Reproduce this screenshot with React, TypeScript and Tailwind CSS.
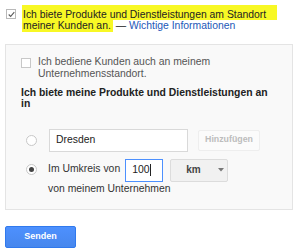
import React from "react";

export default function App() {
  return (
    <div className="relative w-[293px] h-[250px] bg-white overflow-hidden font-['Liberation_Sans',Arial,sans-serif] text-[#222] text-[10.4px] leading-[11.5px]">
      {/* Top checkbox row */}
      <div className="flex items-start pl-[6px] pt-[9px]">
        <div className="w-[10px] h-[10px] border border-[#b9b9b9] bg-white flex items-center justify-center shrink-0">
          <svg width="10" height="9" viewBox="0 0 10 9" className="ml-[1px]">
            <path d="M1 4.5 L3.8 7.2 L9 1.2" fill="none" stroke="#5a5a5a" strokeWidth="1.5" />
          </svg>
        </div>
        <div className="ml-[6px] -mt-[0.5px]">
          <div>
            <span className="bg-[#f8f825] pl-[1px] pr-[11px] pt-[4px]">
              Ich biete Produkte und Dienstleistungen am Standort
            </span>
          </div>
          <div>
            <span className="bg-[#f8f825] pl-[1px] pr-[2px] pb-[1px]">meiner Kunden an.</span>
            <span> — </span>
            <span className="text-[#2358b8]">Wichtige Informationen</span>
          </div>
        </div>
      </div>

      {/* Panel */}
      <div className="ml-[5px] mt-[12px] w-[288px] h-[166px] border border-[#e4e4e4] bg-[#f9f9f9] pl-[15px] pt-[11.5px]">
        <div className="flex items-start">
          <div className="w-[10px] h-[10px] border border-[#c8c8c8] bg-white shrink-0 mt-[1.5px]" />
          <div className="ml-[7px] text-[#555] w-[200px]">
            Ich bediene Kunden auch an meinem Unternehmensstandort.
          </div>
        </div>
        <div className="mt-[7.5px] font-bold text-[#222] w-[255px]">
          Ich biete meine Produkte und Dienstleistungen an in
        </div>

        <div className="flex items-center mt-[19px]">
          <div className="ml-[5px] w-[11px] h-[11px] rounded-full border border-[#c8c8c8] bg-white shrink-0" />
          <div className="ml-[12px] w-[139px] h-[23px] border border-[#d9d9d9] bg-white flex items-center pl-[6px] text-[#222]">
            Dresden
          </div>
          <div className="ml-[10px] w-[62px] h-[21px] border border-[#eeeeee] bg-[#fbfbfb] rounded-[2px] flex items-center justify-center text-[8.8px] font-bold text-[#bdbdbd]">
            Hinzufügen
          </div>
        </div>

        <div className="flex items-center mt-[7px]">
          <div className="ml-[5px] w-[11px] h-[11px] rounded-full border border-[#c8c8c8] bg-white shrink-0 flex items-center justify-center -mt-[2px]">
            <div className="w-[5px] h-[5px] rounded-full bg-[#444]" />
          </div>
          <div className="ml-[11px] text-[#333] -mt-[2px]">Im Umkreis von</div>
          <div className="ml-[5px] w-[38px] h-[23px] border border-[#4d90fe] bg-white flex items-center pl-[6px] text-[#222]">
            100<span className="inline-block w-[1px] h-[12px] bg-[#222]" />
          </div>
          <div className="ml-[7px] w-[58px] h-[23px] border border-[#dcdcdc] bg-[#f1f1f1] rounded-[2px] flex items-center pl-[15px] text-[10px] font-bold text-[#444]">
            km
            <svg width="6" height="4" viewBox="0 0 6 4" className="ml-[17px]">
              <path d="M0 0 L6 0 L3 3.5 Z" fill="#777" />
            </svg>
          </div>
        </div>
        <div className="ml-[27px] mt-[1px] text-[#333]">von meinem Unternehmen</div>
      </div>

      {/* Senden button */}
      <div className="ml-[5px] mt-[16px] w-[71px] h-[22px] rounded-[2px] border border-[#3079ed] bg-gradient-to-b from-[#4d90fe] to-[#4787ed] flex items-center justify-center text-[9px] font-bold text-white">
        Senden
      </div>
    </div>
  );
}
